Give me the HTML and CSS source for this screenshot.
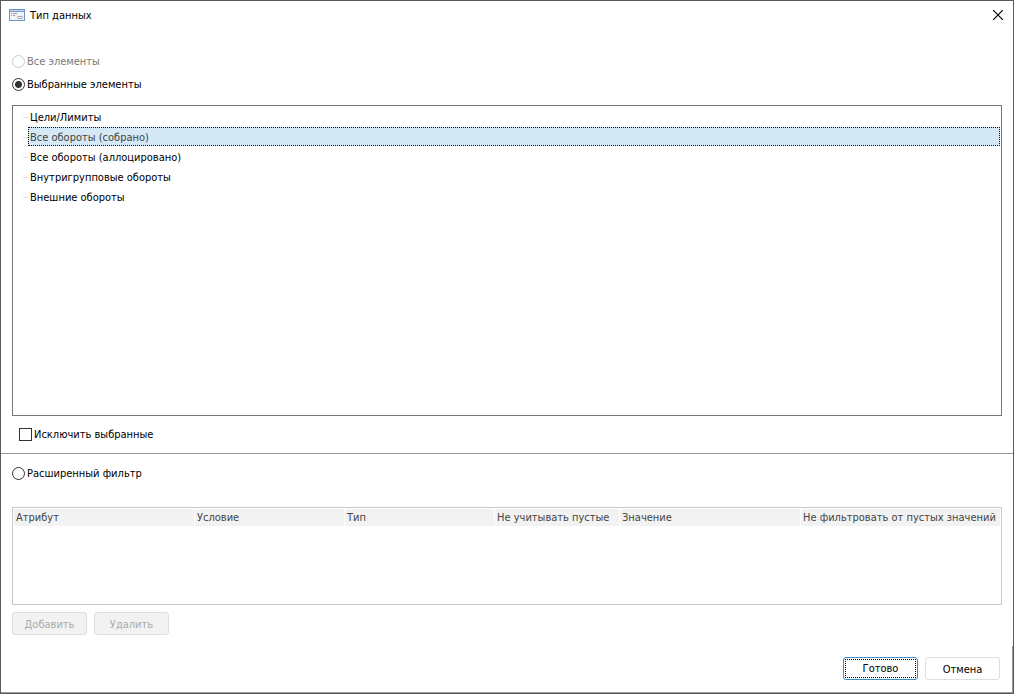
FILE: index.html
```html
<!DOCTYPE html>
<html lang="ru">
<head>
<meta charset="utf-8">
<title>Тип данных</title>
<link rel="stylesheet" href="styles.css">
</head>
<body>
<main class="dialog">
  <header class="titlebar">
    <svg class="title-icon" width="16" height="12" viewBox="0 0 16 12" aria-hidden="true" shape-rendering="crispEdges">
      <rect x=".5" y=".5" width="15" height="11" fill="#f1f3f5" stroke="#6f94c2"/>
      <path d="M1 1.5h14" stroke="#b9d0ea"/>
      <path d="M1 2.5h14" stroke="#7f9fc6"/>
      <path d="M2 4.5h1M4 4.5h4M2 6.5h1M4 6.5h2" stroke="#999"/>
      <rect x="8.5" y="7.5" width="5" height="2" rx="1" fill="#fff" stroke="#999" shape-rendering="auto"/>
    </svg>
    <h1 class="title">Тип данных</h1>
    <button class="close" type="button" aria-label="Закрыть">
      <svg width="10" height="10" viewBox="0 0 10 10" aria-hidden="true"><path d="M0 0l10 10M10 0L0 10" stroke="#000" stroke-width="1.2"/></svg>
    </button>
  </header>
  <section class="elements">
    <label class="option option-disabled"><input class="radio" type="radio" name="mode" disabled>Все элементы</label>
    <label class="option"><input class="radio" type="radio" name="mode" checked>Выбранные элементы</label>
    <ul class="tree">
      <li class="tree-item"><span class="tree-label">Цели/Лимиты</span></li>
      <li class="tree-item"><span class="tree-label tree-selected">Все обороты (собрано)</span></li>
      <li class="tree-item"><span class="tree-label">Все обороты (аллоцировано)</span></li>
      <li class="tree-item"><span class="tree-label">Внутригрупповые обороты</span></li>
      <li class="tree-item"><span class="tree-label">Внешние обороты</span></li>
    </ul>
    <label class="option option-exclude"><input class="checkbox" type="checkbox">Исключить выбранные</label>
  </section>
  <section class="filter">
    <label class="option"><input class="radio" type="radio" name="mode">Расширенный фильтр</label>
    <div class="grid">
      <table class="grid-table">
        <colgroup><col class="col-wide"><col class="col-mid"><col class="col-mid"><col class="col-small"><col class="col-wide"><col></colgroup>
        <thead>
          <tr><th>Атрибут</th><th>Условие</th><th>Тип</th><th>Не учитывать пустые</th><th>Значение</th><th>Не фильтровать от пустых значений</th></tr>
        </thead>
      </table>
    </div>
    <div class="actions">
      <button class="button" type="button" disabled>Добавить</button>
      <button class="button" type="button" disabled>Удалить</button>
    </div>
  </section>
  <footer class="footer">
    <button class="button button-primary" type="button"><span class="focus">Готово</span></button>
    <button class="button" type="button">Отмена</button>
  </footer>
</main>
</body>
</html>
```
FILE: styles.css
```css
* { box-sizing: border-box; }
body {
  margin: 0;
  font: 11px/15px Tahoma, "DejaVu Sans Condensed", "Noto Sans", sans-serif;
  color: #000;
  background: #fff;
}
button, input { font: inherit; color: inherit; margin: 0; }
.dialog {
  display: flex;
  flex-direction: column;
  min-height: 100vh;
  border: 1px solid #585858;
}
.titlebar {
  display: flex;
  align-items: center;
  height: 28px;
  padding: 0 8px;
}
.title-icon { flex: none; }
.title { margin: 0 auto 0 5px; padding-top: 1px; font-size: 11px; font-weight: 400; }
.close {
  display: flex;
  padding: 2px;
  border: 0;
  background: none;
}
.elements {
  display: flex;
  flex: 1;
  flex-direction: column;
  padding: 21px 11px 8px;
  border-bottom: 1px solid #999;
}
.option {
  display: flex;
  align-items: center;
  align-self: flex-start;
  gap: 2px;
  height: 23px;
}
.option-disabled { color: #777; }
.option-exclude { margin: 7px 0 0 7px; height: 22px; }
.radio, .checkbox {
  appearance: none;
  flex: none;
  width: 13px;
  height: 13px;
  border: 1px solid #333;
  background: #fff;
}
.radio { border-radius: 50%; }
.radio:checked { background: radial-gradient(circle, #333 3px, #fff 4px); }
.radio:disabled { border-color: #ccc; }
.tree {
  flex: 1;
  margin: 9px 0 0;
  padding: 1px;
  list-style: none;
  border: 1px solid #777;
}
.tree-item {
  display: flex;
  height: 20px;
  padding-left: 9px;
}
.tree-item::before { content: ""; align-self: center; width: 5px; border-top: 1px solid #e0e0e0; }
.tree-label { flex: 1; height: 19px; padding: 2px 1px; border: 1px dotted transparent; }
.tree-selected { color: #444; background: #d5e8f6; border-color: #111; }
.filter { padding: 8px 11px 0; }
.grid {
  height: 98px;
  margin-top: 22px;
  padding: 1px;
  border: 1px solid #c8c8c8;
}
.grid-table {
  width: 100%;
  table-layout: fixed;
  border-collapse: separate;
  border-spacing: 0;
}
.col-wide { width: 181px; }
.col-mid { width: 150px; }
.col-small { width: 125px; }
.grid-table th {
  height: 17px;
  padding: 0 0 0 2px;
  font-weight: 400;
  text-align: left;
  white-space: nowrap;
  color: #444;
  background: #f2f2f2;
  border-right: 1px solid #fff;
}
.grid-table th:last-child { border-right: 0; }
.actions { display: flex; gap: 7px; margin-top: 7px; }
.button {
  width: 75px;
  height: 23px;
  padding: 1px 0 0;
  border: 1px solid #dedede;
  border-radius: 3px;
  background: #fff;
}
.button:disabled { color: #aaa; background: #f2f2f2; }
.button-primary { padding: 1px; border-color: #3c8dc5; }
.focus {
  display: flex;
  align-items: center;
  justify-content: center;
  height: 100%;
  border: 1px dotted #000;
}
.footer {
  display: flex;
  justify-content: flex-end;
  gap: 7px;
  margin-top: 11px;
  padding: 11px 12px 12px 0;
  border-right: 1px solid #999;
  border-bottom: 1px solid #999;
}
```
